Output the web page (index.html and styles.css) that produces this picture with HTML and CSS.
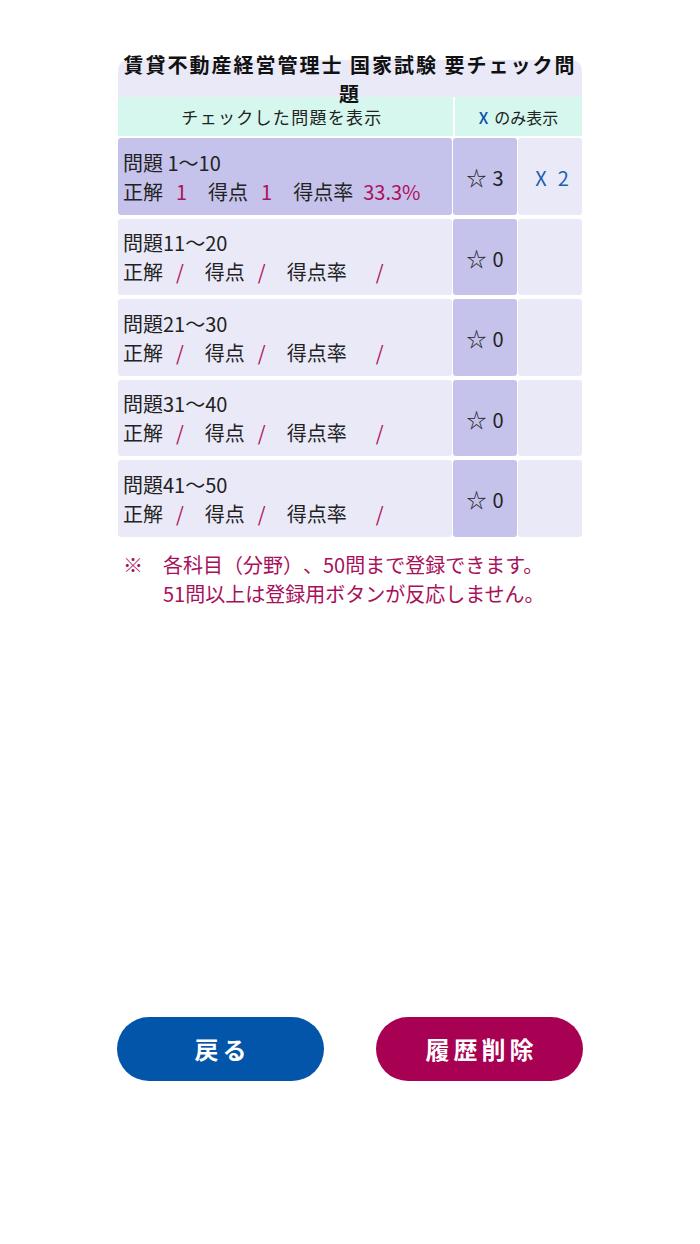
FILE: index.html
```html
<!DOCTYPE html>
<html lang="ja">
<head>
<meta charset="utf-8">
<title>要チェック問題</title>
<link rel="stylesheet" href="styles.css">
</head>
<body>
<div class="page">
  <div class="sheet">
    <h1 class="title">賃貸不動産経営管理士 国家試験 要チェック問題</h1>
    <div class="tabs">
      <div class="tab tab-check">チェックした問題を表示</div>
      <div class="tab tab-x"><span class="x">X</span>のみ表示</div>
    </div>
    <div class="rows">
      <div class="row active">
        <div class="cell info">
          <div>問題 1〜10</div>
          <div>正解<span class="v">1</span>得点<span class="v">1</span>得点率<span class="v rate">33.3%</span></div>
        </div>
        <div class="cell star"><span class="s">☆</span>3</div>
        <div class="cell xcount"><span class="xm">X</span>2</div>
      </div>
      <div class="row">
        <div class="cell info">
          <div>問題11〜20</div>
          <div>正解<span class="v">/</span>得点<span class="v">/</span>得点率<span class="v rate empty">/</span></div>
        </div>
        <div class="cell star"><span class="s">☆</span>0</div>
        <div class="cell xcount"></div>
      </div>
      <div class="row">
        <div class="cell info">
          <div>問題21〜30</div>
          <div>正解<span class="v">/</span>得点<span class="v">/</span>得点率<span class="v rate empty">/</span></div>
        </div>
        <div class="cell star"><span class="s">☆</span>0</div>
        <div class="cell xcount"></div>
      </div>
      <div class="row">
        <div class="cell info">
          <div>問題31〜40</div>
          <div>正解<span class="v">/</span>得点<span class="v">/</span>得点率<span class="v rate empty">/</span></div>
        </div>
        <div class="cell star"><span class="s">☆</span>0</div>
        <div class="cell xcount"></div>
      </div>
      <div class="row">
        <div class="cell info">
          <div>問題41〜50</div>
          <div>正解<span class="v">/</span>得点<span class="v">/</span>得点率<span class="v rate empty">/</span></div>
        </div>
        <div class="cell star"><span class="s">☆</span>0</div>
        <div class="cell xcount"></div>
      </div>
    </div>
    <div class="note">
      <span class="mark">※</span>
      <p>各科目（分野）、50問まで登録できます。<br>51問以上は登録用ボタンが反応しません。</p>
    </div>
  </div>
  <div class="actions">
    <button class="btn btn-back">戻る</button>
    <button class="btn btn-clear">履歴削除</button>
  </div>
</div>
</body>
</html>
```
FILE: styles.css
```css
html, body {
  margin: 0;
  padding: 0;
  background: #ffffff;
}
body {
  font-family: "Noto Sans CJK JP", "Noto Sans", sans-serif;
  color: #222222;
  text-spacing-trim: space-all;
}
.page {
  width: 700px;
  min-height: 1244px;
}
.sheet {
  width: 464px;
  margin: 60px auto 0;
}
.title {
  position: relative;
  z-index: 1;
  margin: 0;
  height: 37px;
  background: #eae9f8;
  border-radius: 10px 10px 0 0;
  display: flex;
  align-items: center;
  justify-content: center;
  text-align: center;
  font-size: 20px;
  font-weight: bold;
  line-height: 29px;
  letter-spacing: 2px;
  color: #111111;
}
.tabs {
  display: grid;
  grid-template-columns: 335px 127px;
  column-gap: 2px;
  height: 39px;
}
.tab {
  background: #d5f7ee;
  display: flex;
  align-items: center;
  justify-content: center;
  font-size: 16px;
  color: #222222;
}
.tab-check {
  font-size: 17px;
  letter-spacing: 1.3px;
  padding-right: 7px;
}
.tab-x .x {
  color: #0a52a8;
  font-weight: 500;
  margin-right: 6px;
}
.rows {
  margin-top: 2px;
  display: flex;
  flex-direction: column;
  gap: 4px;
}
.row {
  display: grid;
  grid-template-columns: 1fr 64px 64px;
  column-gap: 1px;
  height: 76.5px;
}
.cell {
  background: #eae9f8;
  border-radius: 3px;
  font-size: 20px;
}
.row.active .info {
  background: #c5c3eb;
}
.info {
  display: flex;
  flex-direction: column;
  justify-content: center;
  padding-left: 5px;
  padding-top: 1px;
  line-height: 29px;
  white-space: nowrap;
}
.v {
  color: #b0105c;
  margin: 0 21px 0 13px;
}
.v.rate {
  margin: 0 0 0 10px;
}
.v.rate.empty {
  margin-left: 29px;
}
.star {
  background: #c5c3eb;
  display: flex;
  align-items: center;
  justify-content: center;
  padding-top: 3px;
  box-sizing: border-box;
}
.star .s {
  margin-right: 6px;
}
.xcount {
  display: flex;
  align-items: center;
  justify-content: center;
  padding-top: 3px;
  padding-left: 4px;
  box-sizing: border-box;
  color: #1d5fb2;
}
.xcount .xm {
  margin-right: 11px;
}
.note {
  display: flex;
  margin-top: 13px;
  padding-left: 5px;
  color: #a8105a;
  font-size: 20px;
  line-height: 29px;
}
.note .mark {
  width: 40px;
  flex: none;
}
.note p {
  margin: 0;
}
.actions {
  width: 466px;
  margin: 409px auto 0;
  display: flex;
  justify-content: space-between;
}
.btn {
  width: 207px;
  height: 64px;
  border: none;
  border-radius: 32px;
  font-family: "Noto Sans CJK JP", "Noto Sans", sans-serif;
  font-size: 24px;
  font-weight: bold;
  letter-spacing: 4px;
  color: #ffffff;
  padding: 0 0 0 4px;
}
.btn-back {
  background: #0255a8;
}
.btn-clear {
  background: #a80052;
}
```
